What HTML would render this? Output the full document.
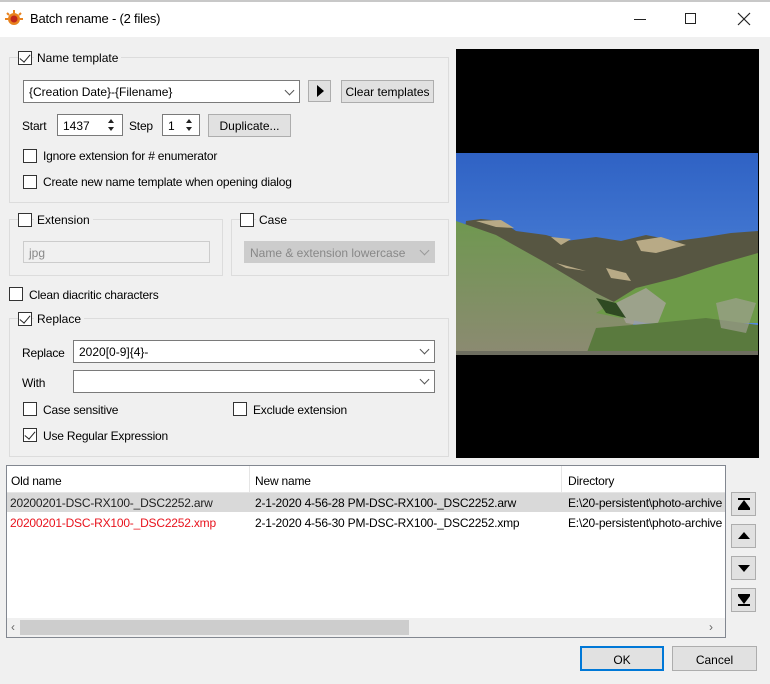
<!DOCTYPE html>
<html><head><meta charset="utf-8"><style>
*{box-sizing:border-box}
body{margin:0;width:770px;height:684px;background:#f0f0f0;font-family:"Liberation Sans",sans-serif;font-size:12px;color:#000;position:relative;overflow:hidden}
.a{position:absolute}
.grp{position:absolute;border:1px solid #dcdcdc}
.cb{position:absolute;width:14px;height:14px;border:1px solid #333;background:#fff}
.cb.on::after{content:"";position:absolute;left:3px;top:0px;width:5px;height:9px;border:solid #222;border-width:0 1.5px 1.5px 0;transform:rotate(40deg)}
.lbl{position:absolute;background:#f0f0f0;padding:0 3px;white-space:nowrap}
.inp{position:absolute;background:#fff;border:1px solid #7a7a7a;padding:2px 5px;white-space:nowrap}
.btn{position:absolute;background:#e1e1e1;border:1px solid #adadad;text-align:center;white-space:nowrap}
.dd{position:absolute;right:6px;top:5px;width:7px;height:7px;border:solid #555;border-width:0 1px 1px 0;transform:rotate(45deg)}
.t{position:absolute;white-space:nowrap;letter-spacing:-0.2px}
</style></head><body>
<div class="a" style="left:0;top:0;width:770px;height:2px;background:#c8c8c8"></div>
<div class="a" style="left:0;top:2px;width:770px;height:35px;background:#fff"></div>
<svg class="a" style="left:5px;top:10px" width="18" height="16"><circle cx="9" cy="9" r="6" fill="#e8821e"/><circle cx="9" cy="9" r="3.5" fill="#c0281c"/><g stroke="#e8821e" stroke-width="2"><line x1="9" y1="0" x2="9" y2="3"/><line x1="2" y1="3" x2="4" y2="5"/><line x1="16" y1="3" x2="14" y2="5"/><line x1="0" y1="9" x2="3" y2="9"/><line x1="18" y1="9" x2="15" y2="9"/></g></svg>
<div class="t" style="left:30px;top:11px;font-size:13px">Batch rename - (2 files)</div>
<div class="a" style="left:634px;top:19px;width:12px;height:1px;background:#222"></div>
<div class="a" style="left:685px;top:13px;width:11px;height:11px;border:1px solid #222"></div>
<svg class="a" style="left:737px;top:12px" width="14" height="14"><path d="M1 1L13 13M13 1L1 13" stroke="#222" stroke-width="1.2"/></svg>

<div class="grp" style="left:9px;top:57px;width:440px;height:146px"></div>
<div class="cb on" style="left:18px;top:51px"></div><div class="lbl" style="left:34px;top:51px">Name template</div>
<div class="inp" style="left:23px;top:80px;width:277px;height:23px;padding-top:4px">{Creation Date}-{Filename}<span class="dd" style="top:6px"></span></div>
<div class="btn" style="left:308px;top:80px;width:23px;height:22px"><svg width="10" height="12" style="margin-top:4px"><path d="M2 0L9 6L2 12Z" fill="#000"/></svg></div>
<div class="btn" style="left:341px;top:80px;width:93px;height:23px;padding-top:4px">Clear templates</div>
<div class="t" style="left:22px;top:119px">Start</div>
<div class="inp" style="left:57px;top:114px;width:66px;height:22px;padding-top:4px">1437</div>
<div class="t" style="left:129px;top:119px">Step</div>
<div class="inp" style="left:162px;top:114px;width:38px;height:22px;padding-top:4px">1</div>
<svg class="a" style="left:105px;top:117px" width="12" height="16"><path d="M6 2L9 6H3ZM6 14L9 10H3Z" fill="#222"/></svg>
<svg class="a" style="left:183px;top:117px" width="12" height="16"><path d="M6 2L9 6H3ZM6 14L9 10H3Z" fill="#222"/></svg>
<div class="btn" style="left:208px;top:114px;width:83px;height:23px;padding-top:4px">Duplicate...</div>
<div class="cb" style="left:23px;top:149px"></div><div class="t" style="left:43px;top:149px">Ignore extension for # enumerator</div>
<div class="cb" style="left:23px;top:175px"></div><div class="t" style="left:43px;top:175px">Create new name template when opening dialog</div>

<div class="grp" style="left:9px;top:219px;width:214px;height:57px"></div>
<div class="cb" style="left:18px;top:213px"></div><div class="lbl" style="left:34px;top:213px">Extension</div>
<div class="inp" style="left:23px;top:241px;width:187px;height:22px;background:#f0f0f0;border-color:#ccc;color:#888;padding-top:4px">jpg</div>
<div class="grp" style="left:231px;top:219px;width:218px;height:57px"></div>
<div class="cb" style="left:240px;top:213px"></div><div class="lbl" style="left:256px;top:213px">Case</div>
<div class="inp" style="left:244px;top:241px;width:191px;height:22px;background:#cccccc;border-color:#ccc;color:#888;padding-top:4px">Name &amp; extension lowercase<span class="dd" style="border-color:#999"></span></div>

<div class="cb" style="left:9px;top:287px"></div><div class="t" style="left:29px;top:288px">Clean diacritic characters</div>

<div class="grp" style="left:9px;top:318px;width:440px;height:139px"></div>
<div class="cb on" style="left:18px;top:312px"></div><div class="lbl" style="left:34px;top:312px">Replace</div>
<div class="t" style="left:22px;top:346px">Replace</div>
<div class="inp" style="left:73px;top:340px;width:362px;height:23px;padding-top:4px">2020[0-9]{4}-<span class="dd"></span></div>
<div class="t" style="left:22px;top:376px">With</div>
<div class="inp" style="left:73px;top:370px;width:362px;height:23px"><span class="dd"></span></div>
<div class="cb" style="left:23px;top:402px"></div><div class="t" style="left:43px;top:403px">Case sensitive</div>
<div class="cb" style="left:233px;top:402px"></div><div class="t" style="left:253px;top:403px">Exclude extension</div>
<div class="cb on" style="left:23px;top:428px"></div><div class="t" style="left:43px;top:429px">Use Regular Expression</div>

<div class="a" style="left:456px;top:49px;width:303px;height:409px;background:#000"></div>
<svg class="a" style="left:456px;top:153px" width="302" height="202" viewBox="0 0 302 202">
<defs><linearGradient id="sky" x1="0" y1="0" x2="0" y2="1"><stop offset="0" stop-color="#2f62c4"/><stop offset="1" stop-color="#5a90e0"/></linearGradient>
<linearGradient id="g" x1="0" y1="0" x2="0" y2="1"><stop offset="0" stop-color="#6f9850"/><stop offset="1" stop-color="#8c8a72"/></linearGradient></defs>
<rect width="302" height="202" fill="url(#sky)"/>
<path d="M10 68L25 66L45 68L60 78L90 82L110 88L140 84L165 88L190 82L220 88L250 84L275 80L302 78V160H0Z" fill="#575642"/>
<path d="M20 68L45 67L58 75L40 74ZM95 84L115 86L105 92ZM180 88L205 84L230 92L200 100L185 98ZM150 115L170 120L175 128L155 125ZM100 110L130 118L110 115Z" fill="#b8aa86"/>
<path d="M0 68L40 82L90 110L140 140L180 160L170 202H0Z" fill="url(#g)"/>
<path d="M302 100L260 112L220 125L180 135L140 160L190 170L302 170Z" fill="#6d9a48"/>
<path d="M160 150L190 135L210 150L200 175L170 170Z" fill="#a8a49c" opacity=".8"/>
<path d="M140 145L160 150L170 165L150 160Z" fill="#2f4a22"/>
<path d="M140 175L200 170L250 165L302 172V202H130Z" fill="#5a7a3e"/>
<path d="M260 150L280 145L300 150L290 180L265 175Z" fill="#a8a49c" opacity=".6"/>
<rect y="198" width="302" height="4" fill="#6e6e60"/>
</svg>

<div class="a" style="left:6px;top:465px;width:720px;height:173px;background:#fff;border:1px solid #828790"></div>
<div class="a" style="left:7px;top:466px;width:718px;height:27px;background:#fff;border-bottom:1px solid #e5e5e5"></div>
<div class="a" style="left:249px;top:466px;width:1px;height:27px;background:#e5e5e5"></div>
<div class="a" style="left:561px;top:466px;width:1px;height:27px;background:#e5e5e5"></div>
<div class="t" style="left:11px;top:474px">Old name</div>
<div class="t" style="left:255px;top:474px">New name</div>
<div class="t" style="left:568px;top:474px">Directory</div>
<div class="a" style="left:7px;top:493px;width:718px;height:19px;background:#d9d9d9"></div>
<div class="t" style="left:10px;top:496px;color:#222">20200201-DSC-RX100-_DSC2252.arw</div>
<div class="t" style="left:255px;top:496px">2-1-2020 4-56-28 PM-DSC-RX100-_DSC2252.arw</div>
<div class="t" style="left:568px;top:496px;width:156px;overflow:hidden">E:\20-persistent\photo-archive</div>
<div class="t" style="left:10px;top:516px;color:#e8141e">20200201-DSC-RX100-_DSC2252.xmp</div>
<div class="t" style="left:255px;top:516px">2-1-2020 4-56-30 PM-DSC-RX100-_DSC2252.xmp</div>
<div class="t" style="left:568px;top:516px;width:156px;overflow:hidden">E:\20-persistent\photo-archive</div>
<div class="a" style="left:7px;top:618px;width:718px;height:19px;background:#f0f0f0"></div>
<div class="a" style="left:20px;top:620px;width:389px;height:15px;background:#cdcdcd"></div>
<div class="t" style="left:11px;top:620px;color:#666">‹</div>
<div class="t" style="left:709px;top:620px;color:#666">›</div>

<div class="btn" style="left:731px;top:492px;width:25px;height:24px"><svg width="14" height="14" style="margin-top:4px"><rect x="1" y="1" width="12" height="2"/><path d="M7 3L13 11H1Z"/><rect x="1" y="11" width="12" height="2"/></svg></div>
<div class="btn" style="left:731px;top:524px;width:25px;height:24px"><svg width="14" height="14" style="margin-top:4px"><path d="M7 3L13 10H1Z"/></svg></div>
<div class="btn" style="left:731px;top:556px;width:25px;height:24px"><svg width="14" height="14" style="margin-top:4px"><path d="M7 11L13 4H1Z"/></svg></div>
<div class="btn" style="left:731px;top:588px;width:25px;height:24px"><svg width="14" height="14" style="margin-top:4px"><rect x="1" y="1" width="12" height="2"/><path d="M7 11L13 3H1Z"/><rect x="1" y="11" width="12" height="2"/></svg></div>

<div class="btn" style="left:580px;top:646px;width:84px;height:25px;border:2px solid #0078d7;padding-top:5px">OK</div>
<div class="btn" style="left:672px;top:646px;width:85px;height:25px;padding-top:6px">Cancel</div>
</body></html>
